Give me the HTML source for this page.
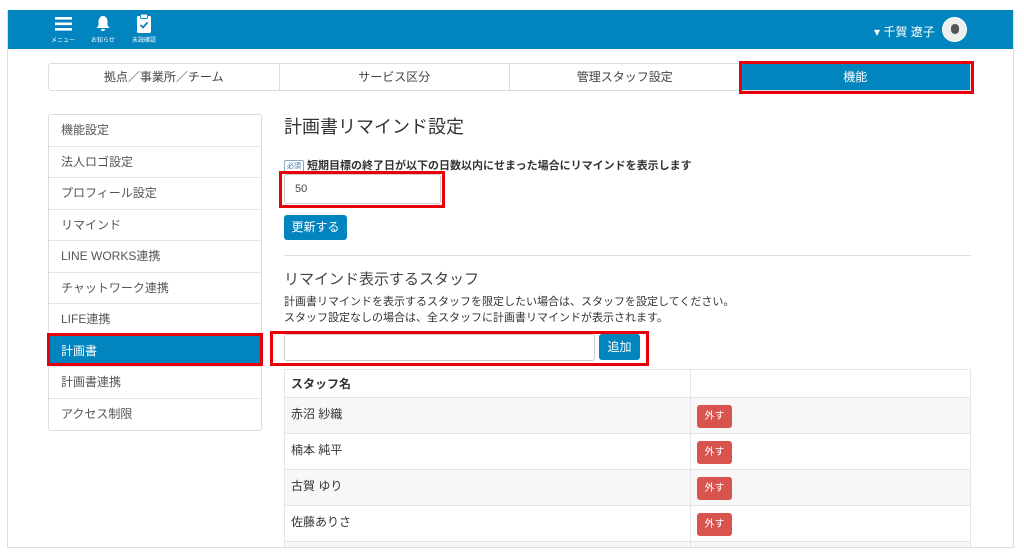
<!DOCTYPE html>
<html><head><meta charset="utf-8"><style>
*{box-sizing:border-box;margin:0;padding:0}
body{width:1024px;height:558px;background:#fff;font-family:"Liberation Sans","Noto Sans CJK JP",sans-serif;position:relative;overflow:hidden;color:#333}
.frame{position:absolute;left:7px;top:10px;width:1007px;height:538px;border:1px solid #ddd;border-top:none;overflow:hidden}
.hdr{position:absolute;left:0;top:0;width:1006px;height:39px;background:#0284be}
.ic{position:absolute;color:#fff;font-size:6px;text-align:center;white-space:nowrap}
.tabs{position:absolute;left:40px;top:53px;width:923px;height:28px;border:1px solid #ddd;border-radius:3px;display:flex}
.tabs div{flex:1;text-align:center;line-height:26px;font-size:12px;color:#444;border-right:1px solid #ddd}
.tabs div:last-child{border-right:none;background:#0284be;color:#fff}
.red{position:absolute;border:3px solid #e8000b}
.side{position:absolute;left:40px;top:104px;width:214px;border:1px solid #ddd;border-radius:3px}
.side div{height:31.5px;line-height:31px;padding-left:12px;font-size:12px;color:#555;border-bottom:1px solid #e5e5e5}
.side div:last-child{border-bottom:none}
.side .act{background:#0284be;color:#fff}
.abs{position:absolute}
.btn{position:absolute;background:#0284be;color:#fff;border-radius:3px;font-size:12px;text-align:center}
.tbl{position:absolute;left:276px;top:359px;width:687px;border:1px solid #e5e5e5;border-bottom:none}
.tbl .r{height:36px;border-bottom:1px solid #e5e5e5;display:flex;font-size:12px}
.tbl .r div:first-child{width:406px;border-right:1px solid #e5e5e5;padding:7px 6px}
.tbl .r:nth-child(even){background:#f7f7f7}
.x{display:inline-block;background:#d9534f;color:#fff;font-size:10px;border-radius:3px;width:35px;height:23px;line-height:23px;text-align:center;margin:7px 0 0 6px}
</style></head><body>
<div class="frame">
<div class="hdr">
 <div class="ic" style="left:38px;top:7px;width:34px"><svg width="17" height="14" viewBox="0 0 17 14"><rect y="0" width="17" height="2.6" fill="#fff"/><rect y="5.5" width="17" height="2.6" fill="#fff"/><rect y="11" width="17" height="2.6" fill="#fff"/></svg><div style="margin-top:2px">メニュー</div></div>
 <div class="ic" style="left:80px;top:5px;width:30px"><svg width="14" height="17" viewBox="0 0 14 17"><path d="M7 1C4 1 2.5 4 2.5 6.5v4L0.5 13h13l-2-2.5v-4C11.5 4 10 1 7 1z M5 14a2 2 0 0 0 4 0z" fill="#fff"/></svg><div style="margin-top:1px">お知らせ</div></div>
 <div class="ic" style="left:120px;top:4px;width:32px"><svg width="14" height="19" viewBox="0 0 14 19"><rect x="0" y="2" width="14" height="17" rx="1.5" fill="#fff"/><rect x="3.5" y="0" width="7" height="4.5" rx="1" fill="#fff" stroke="#0284be" stroke-width=".9"/><path d="M3.5 11l2.5 2.5 4.5-5" stroke="#0284be" stroke-width="1.8" fill="none"/></svg><div>未読確認</div></div>
 <div class="abs" style="left:866px;top:13px;color:#fff;font-size:12px">▾ 千賀 遼子</div>
 <div class="abs" style="left:934px;top:7px;width:25px;height:25px;border-radius:50%;background:#eee;border:1px solid #fff"><div style="width:8px;height:10px;background:#555;border-radius:4px;margin:6px auto 0"></div></div>
</div>
<div class="tabs"><div>拠点／事業所／チーム</div><div>サービス区分</div><div>管理スタッフ設定</div><div>機能</div></div>
<div class="red" style="left:731px;top:51px;width:235px;height:33px"></div>
<div class="side">
<div>機能設定</div><div>法人ロゴ設定</div><div>プロフィール設定</div><div>リマインド</div><div>LINE WORKS連携</div><div>チャットワーク連携</div><div>LIFE連携</div><div class="act">計画書</div><div>計画書連携</div><div>アクセス制限</div>
</div>
<div class="red" style="left:39px;top:323px;width:216px;height:33px"></div>
<div class="abs" style="left:276px;top:103px;font-size:18px;color:#333">計画書リマインド設定</div>
<div class="abs" style="left:276px;top:147px;font-size:11px;font-weight:bold"><span style="display:inline-block;border:1px solid #8ab;color:#2a7ab0;font-size:7px;font-weight:normal;padding:0 2px;border-radius:2px;vertical-align:1px">必須</span> 短期目標の終了日が以下の日数以内にせまった場合にリマインドを表示します</div>
<div class="abs" style="left:276px;top:164px;width:157px;height:30px;border:1px solid #ccc;border-radius:3px;font-size:11px;padding:8px 10px;color:#444">50</div>
<div class="red" style="left:271px;top:161px;width:166px;height:37px"></div>
<div class="btn" style="left:276px;top:205px;width:63px;height:25px;line-height:25px">更新する</div>
<div class="abs" style="left:276px;top:245px;width:687px;height:1px;background:#ddd"></div>
<div class="abs" style="left:276px;top:258px;font-size:15px;color:#444">リマインド表示するスタッフ</div>
<div class="abs" style="left:276px;top:284px;font-size:11px;line-height:16px;color:#333">計画書リマインドを表示するスタッフを限定したい場合は、スタッフを設定してください。<br>スタッフ設定なしの場合は、全スタッフに計画書リマインドが表示されます。</div>
<div class="abs" style="left:276px;top:324px;width:311px;height:27px;border:1px solid #ccc;border-radius:3px"></div>
<div class="btn" style="left:591px;top:324px;width:41px;height:26px;line-height:26px">追加</div>
<div class="red" style="left:262px;top:321px;width:379px;height:35px"></div>
<div class="tbl">
<div class="r" style="height:28px"><div style="font-weight:bold;padding-top:5px">スタッフ名</div><div></div></div>
<div class="r"><div>赤沼 紗織</div><div><span class="x">外す</span></div></div>
<div class="r"><div>楠本 純平</div><div><span class="x">外す</span></div></div>
<div class="r"><div>古賀 ゆり</div><div><span class="x">外す</span></div></div>
<div class="r"><div>佐藤ありさ</div><div><span class="x">外す</span></div></div>
<div class="r"><div></div><div></div></div>
</div>
</div>
</body></html>
